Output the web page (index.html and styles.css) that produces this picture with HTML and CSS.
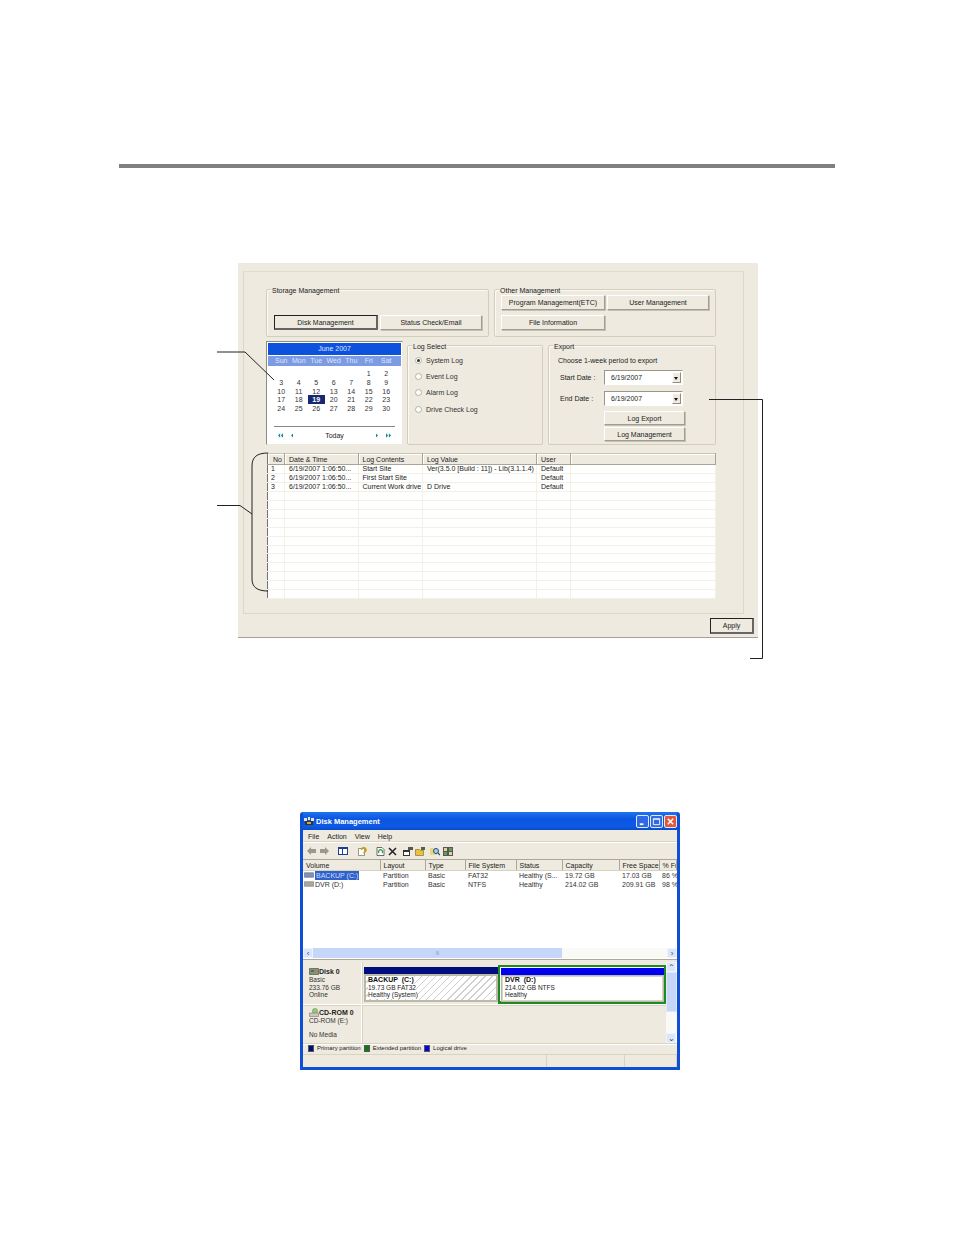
FILE: index.html
```html
<!DOCTYPE html>
<html lang="en">
<head>
<meta charset="utf-8">
<title>Log Management and Disk Management</title>
<link rel="stylesheet" href="styles.css">
</head>
<body>
<main class="page">
  <hr class="rule">

  <section class="dialog">
    <div class="panel">
      <div class="row-top">
        <fieldset class="group storage">
          <legend class="legend">Storage Management</legend>
          <div class="btn-row">
            <button class="btn btn-default w104">Disk Management</button>
            <button class="btn w102">Status Check/Email</button>
          </div>
        </fieldset>
        <fieldset class="group other">
          <legend class="legend">Other Management</legend>
          <div class="btn-row">
            <button class="btn w104">Program Management(ETC)</button>
            <button class="btn w102">User Management</button>
          </div>
          <div class="btn-row second">
            <button class="btn w104">File Information</button>
          </div>
        </fieldset>
      </div>

      <div class="row-mid">
        <div class="calendar">
          <div class="cal-title">June 2007</div>
          <div class="cal-head"><span>Sun</span><span>Mon</span><span>Tue</span><span>Wed</span><span>Thu</span><span>Fri</span><span>Sat</span></div>
          <div class="cal-days">
            <span></span><span></span><span></span><span></span><span></span><span>1</span><span>2</span>
            <span>3</span><span>4</span><span>5</span><span>6</span><span>7</span><span>8</span><span>9</span>
            <span>10</span><span>11</span><span>12</span><span>13</span><span>14</span><span>15</span><span>16</span>
            <span>17</span><span>18</span><span class="today">19</span><span>20</span><span>21</span><span>22</span><span>23</span>
            <span>24</span><span>25</span><span>26</span><span>27</span><span>28</span><span>29</span><span>30</span>
          </div>
          <div class="cal-nav">
            <span class="nav-left">
              <svg class="nav-ico" viewBox="0 0 7 6"><path d="M3 0v6L0 3zM7 0v6L4 3z"/></svg>
              <svg class="nav-ico single" viewBox="0 0 3 6"><path d="M3 0v6L0 3z"/></svg>
            </span>
            <span class="nav-today">Today</span>
            <span class="nav-right">
              <svg class="nav-ico single" viewBox="0 0 3 6"><path d="M0 0v6l3-3z"/></svg>
              <svg class="nav-ico" viewBox="0 0 7 6"><path d="M0 0v6l3-3zM4 0v6l3-3z"/></svg>
            </span>
          </div>
        </div>

        <fieldset class="group logselect">
          <legend class="legend">Log Select</legend>
          <label class="radio"><i class="dot on"></i>System Log</label>
          <label class="radio"><i class="dot"></i>Event Log</label>
          <label class="radio"><i class="dot"></i>Alarm Log</label>
          <label class="radio"><i class="dot"></i>Drive Check Log</label>
        </fieldset>

        <fieldset class="group export">
          <legend class="legend">Export</legend>
          <p class="choose">Choose 1-week period to export</p>
          <div class="date-row start"><span class="date-label">Start Date :</span><span class="combo"><span class="combo-val">6/19/2007</span><span class="combo-btn"><i></i></span></span></div>
          <div class="date-row"><span class="date-label">End Date :</span><span class="combo"><span class="combo-val">6/19/2007</span><span class="combo-btn"><i></i></span></span></div>
          <button class="btn w81 logexport">Log Export</button>
          <button class="btn w81 logmgmt">Log Management</button>
        </fieldset>
      </div>

      <table class="log">
        <colgroup><col class="c1"><col class="c2"><col class="c3"><col class="c4"><col class="c5"><col></colgroup>
        <thead><tr><th>No</th><th>Date &amp; Time</th><th>Log Contents</th><th>Log Value</th><th>User</th><th></th></tr></thead>
        <tbody>
          <tr><td>1</td><td>6/19/2007 1:06:50...</td><td>Start Site</td><td>Ver(3.5.0 [Build : 11]) - Lib(3.1.1.4)</td><td>Default</td><td></td></tr>
          <tr><td>2</td><td>6/19/2007 1:06:50...</td><td>First Start Site</td><td></td><td>Default</td><td></td></tr>
          <tr><td>3</td><td>6/19/2007 1:06:50...</td><td>Current Work drive</td><td>D Drive</td><td>Default</td><td></td></tr>
          <tr><td></td><td></td><td></td><td></td><td></td><td></td></tr>
          <tr><td></td><td></td><td></td><td></td><td></td><td></td></tr>
          <tr><td></td><td></td><td></td><td></td><td></td><td></td></tr>
          <tr><td></td><td></td><td></td><td></td><td></td><td></td></tr>
          <tr><td></td><td></td><td></td><td></td><td></td><td></td></tr>
          <tr><td></td><td></td><td></td><td></td><td></td><td></td></tr>
          <tr><td></td><td></td><td></td><td></td><td></td><td></td></tr>
          <tr><td></td><td></td><td></td><td></td><td></td><td></td></tr>
          <tr><td></td><td></td><td></td><td></td><td></td><td></td></tr>
          <tr><td></td><td></td><td></td><td></td><td></td><td></td></tr>
          <tr><td></td><td></td><td></td><td></td><td></td><td></td></tr>
          <tr><td></td><td></td><td></td><td></td><td></td><td></td></tr>
        </tbody>
      </table>
    </div>
    <div class="apply-row"><button class="btn btn-default apply">Apply</button></div>
  </section>

  <section class="xpwin">
    <header class="xp-title">
      <svg class="xp-appicon" viewBox="0 0 10 10"><path fill="#e8e4d0" d="M0 2h3v3H0zM4 1h2v3H4zM7 2h3v3H7z"/><path fill="#333" d="M1 5h8v4H1z"/><path fill="#c9a94a" d="M3 6h4v2H3z"/></svg>
      <span class="xp-name">Disk Management</span>
      <span class="xp-controls">
        <span class="xp-ctl"><svg viewBox="0 0 10 10"><path fill="#fff" d="M2 7h4v2H2z"/></svg></span>
        <span class="xp-ctl"><svg viewBox="0 0 10 10"><path fill="none" stroke="#fff" d="M1.500 2.500h7v6h-7z"/><path stroke="#fff" d="M1 2h8"/></svg></span>
        <span class="xp-ctl close"><svg viewBox="0 0 10 10"><path stroke="#fff" stroke-width="1.600" d="M2 2l6 6M8 2l-6 6"/></svg></span>
      </span>
    </header>
    <div class="xp-body">
      <nav class="xp-menu"><span>File</span><span>Action</span><span>View</span><span>Help</span></nav>
      <div class="xp-tools">
        <svg class="t back" viewBox="0 0 9 8"><path fill="#9a9a8c" d="M0 4l4-4v2h5v4H4v2z"/></svg>
        <svg class="t fwd" viewBox="0 0 9 8"><path fill="#9a9a8c" d="M9 4L5 0v2H0v4h5v2z"/></svg>
        <svg class="t tree" viewBox="0 0 10 8"><path fill="#1c3f94" d="M0 0h10v8H0z"/><path fill="#fff" d="M1 2h3v5H1zM5 2h4v5H5z"/></svg>
        <svg class="t help" viewBox="0 0 9 9"><path fill="#fff" stroke="#555" stroke-width=".6" d="M.5 1.500h6v7h-6z"/><path fill="none" stroke="#c9a010" stroke-width="1.600" d="M3.500 3c0-3 4.500-3 4.500 0 0 2-2 1.500-2 3.500"/></svg>
        <svg class="t doc" viewBox="0 0 9 9"><path fill="#fff" stroke="#333" stroke-width=".7" d="M1 .5h5l2 2v6H1z"/><path fill="none" stroke="#2a9a3a" stroke-width="1.200" d="M3 6a2 2 0 1 1 3 0"/></svg>
        <svg class="t del" viewBox="0 0 9 9"><path stroke="#222" stroke-width="1.500" d="M1 1l7 7M8 1L1 8"/></svg>
        <svg class="t prop" viewBox="0 0 10 9"><path fill="#333" d="M0 3h7v6H0z"/><path fill="#fff" d="M1 5h5v3H1z"/><path fill="#555" d="M5 0h5v3H5z"/></svg>
        <svg class="t open" viewBox="0 0 11 9"><path fill="#e8c23e" stroke="#7a6420" stroke-width=".6" d="M.5 2.500h4l1 1h3v5h-8z"/><path fill="#4a6a30" d="M6 0h4v3H6z"/></svg>
        <svg class="t find" viewBox="0 0 10 9"><path fill="#e8d87a" d="M0 1h7v7H0z"/><circle cx="6" cy="4" r="2.500" fill="#9fd0ee" stroke="#2c4a80"/><path stroke="#2c4a80" stroke-width="1.200" d="M8 6l2 2"/></svg>
        <svg class="t grid" viewBox="0 0 10 9"><path fill="#556" d="M0 0h10v9H0z"/><path fill="#d8d890" d="M1 1h3v3H1zM6 5h3v3H6z"/><path fill="#6a9a5a" d="M6 1h3v3H6zM1 5h3v3H1z"/></svg>
      </div>

      <div class="xp-listpane">
        <table class="vol">
          <colgroup><col class="v1"><col class="v2"><col class="v3"><col class="v4"><col class="v5"><col class="v6"><col class="v7"><col></colgroup>
          <thead><tr><th>Volume</th><th>Layout</th><th>Type</th><th>File System</th><th>Status</th><th>Capacity</th><th>Free Space</th><th>% Fr</th></tr></thead>
          <tbody>
            <tr><td class="volname"><svg class="drive" viewBox="0 0 11 6"><path fill="#7d93b8" stroke="#56647f" stroke-width=".6" d="M.5.500h10v5H.5z"/></svg><span class="picked">BACKUP (C:)</span></td><td>Partition</td><td>Basic</td><td>FAT32</td><td>Healthy (S...</td><td>19.72 GB</td><td>17.03 GB</td><td>86 %</td></tr>
            <tr><td class="volname"><svg class="drive" viewBox="0 0 11 6"><path fill="#a9a9a4" stroke="#6e6e6a" stroke-width=".6" d="M.5.500h10v5H.5z"/></svg><span>DVR (D:)</span></td><td>Partition</td><td>Basic</td><td>NTFS</td><td>Healthy</td><td>214.02 GB</td><td>209.91 GB</td><td>98 %</td></tr>
          </tbody>
        </table>
        <div class="hscroll">
          <span class="sb-btn">‹</span>
          <span class="hthumb"><i></i></span>
          <span class="hrest"></span>
          <span class="sb-btn">›</span>
        </div>
      </div>

      <div class="xp-diskpane">
        <div class="disks">
          <div class="disk-row d0">
            <div class="disk-info">
              <b class="disk-name"><svg class="disk-ico" viewBox="0 0 10 7"><path fill="#8a8f7a" stroke="#444" stroke-width=".6" d="M.5.500h9v6h-9z"/><path fill="#3f7a4a" d="M2 2h3v2H2z"/></svg>Disk 0</b>
              <span>Basic</span><span>233.76 GB</span><span>Online</span>
            </div>
            <div class="part backup">
              <div class="bar navy"></div>
              <div class="pbox hatch"><b>BACKUP  (C:)</b><span>19.73 GB FAT32</span><span>Healthy (System)</span></div>
            </div>
            <div class="part dvr">
              <div class="bar blue"></div>
              <div class="pbox"><b>DVR  (D:)</b><span>214.02 GB NTFS</span><span>Healthy</span></div>
            </div>
          </div>
          <div class="disk-row d1">
            <div class="disk-info">
              <b class="disk-name"><svg class="disk-ico big" viewBox="0 0 10 9"><circle cx="6" cy="3" r="2.600" fill="#8fd06a" stroke="#777" stroke-width=".5"/><path fill="#c8c8bc" stroke="#666" stroke-width=".5" d="M.5 5h9v3.500h-9z"/></svg>CD-ROM 0</b>
              <span>CD-ROM (E:)</span><span class="nomedia">No Media</span>
            </div>
            <div class="empty"></div>
          </div>
        </div>
        <div class="vscroll">
          <span class="sb-btn">⌃</span>
          <span class="vthumb"></span>
          <span class="vrest"></span>
          <span class="sb-btn">⌄</span>
        </div>
      </div>

      <div class="xp-legend">
        <span class="lg"><i class="sw navybg"></i>Primary partition</span>
        <span class="lg"><i class="sw greenbg"></i>Extended partition</span>
        <span class="lg"><i class="sw bluebg"></i>Logical drive</span>
      </div>
      <div class="xp-status"><span></span><span></span><span></span></div>
    </div>
  </section>

  <svg class="leaders" viewBox="0 0 954 1235" aria-hidden="true">
    <path d="M217 352H245L274 380"/>
    <path d="M217 505.500H240L252 514"/>
    <path d="M268 453C257 453 252 457 252 466V579C252 587 257 591 268 591"/>
    <path d="M709 399.500H762.500V658.500H750"/>
  </svg>
</main>
</body>
</html>
```
FILE: styles.css
```css
* { box-sizing: border-box; }
html, body { margin: 0; padding: 0; background: #fff; }
body { font-family: "Liberation Sans", Arial, sans-serif; font-size: 7px; line-height: 9px; color: #222; }
.page { position: relative; width: 954px; height: 1235px; padding-top: 164px; overflow: hidden; }

.rule { width: 716px; height: 4px; margin: 0 0 95px 119px; border: 0; background: #808080; }

/* Top dialog */
.dialog { width: 520px; height: 375px; margin-left: 238px; padding: 8px 0 0 5px; background: #eeeadf; border-bottom: 1px solid #a89c98; }
.panel { width: 501px; height: 343px; padding: 17px 0 0 22px; border: 1px solid #dcd8c6; border-top-color: #e2decd; }
.row-top { display: flex; gap: 5px; }
.row-mid { display: flex; margin-top: 4px; align-items: flex-end; }

.group { position: relative; min-width: 0; margin: 0; padding: 0; border: 1px solid #d2ceba; border-radius: 2px; box-shadow: inset 1px 1px 0 #fbfaf5; }
.legend { position: absolute; top: -4px; left: 4px; padding: 0 1px; background: #eeeadf; }
.storage { width: 223px; height: 48px; padding: 25px 0 0 7px; }
.other { width: 222px; height: 48px; padding: 5px 0 0 6px; }
.btn-row { display: flex; gap: 2px; }
.btn-row.second { margin-top: 5px; }

.btn { display: block; height: 15px; padding: 0; font: inherit; color: #222; background: #eeeadf; border: 1px solid; border-color: #fff #a09d90 #a09d90 #fff; box-shadow: 1px 1px 0 #c4c1b2; }
.btn-default { border-color: #222; border-right-width: 2px; border-bottom-width: 2px; border-right-color: #666; border-bottom-color: #666; box-shadow: none; }
.w104 { width: 104px; }
.w102 { width: 102px; }
.w81 { width: 81px; }

/* Calendar */
.calendar { width: 137px; height: 104px; padding: 1px 1px 0 1px; background: #fff; border: 1px solid; border-color: #8f8c80 #eeeadf #eeeadf #8f8c80; }
.cal-title { height: 12px; margin-bottom: 1px; line-height: 12px; text-align: center; color: #dfe8ff; background: #0d52dd; }
.cal-head { display: grid; grid-template-columns: repeat(7, 17.5px); height: 10px; padding-left: 4.500px; line-height: 10px; text-align: center; color: #dfe6f8; background: #7c9be2; }
.cal-days { display: grid; grid-template-columns: repeat(7, 17.5px); grid-auto-rows: 8.800px; padding-left: 4.500px; margin-top: 3px; line-height: 9px; text-align: center; color: #333; }
.today { color: #fff; background: #16286f; font-weight: bold; }
.cal-nav { display: flex; align-items: center; height: 18px; margin: 13px 6px 0 6px; border-top: 1px solid #8a887c; padding: 0 4px 0 4px; }
.nav-left, .nav-right { display: flex; align-items: center; gap: 8px; width: 40px; }
.nav-right { justify-content: flex-end; gap: 8px; }
.nav-today { flex: 1; text-align: center; }
.nav-ico { width: 5px; height: 5px; fill: #138a94; }
.nav-ico.single { width: 2px; }

/* Log select */
.logselect { width: 136px; height: 100px; margin-left: 4px; padding: 6px 0 0 7px; }
.radio { display: flex; align-items: center; height: 16.300px; color: #333; }
.dot { position: relative; width: 7px; height: 7px; margin-right: 4px; background: #fff; border: 1px solid #b4b2a4; border-radius: 50%; }
.dot.on::after { content: ""; position: absolute; left: 1px; top: 1px; width: 3px; height: 3px; border-radius: 50%; background: #333; }

/* Export */
.export { width: 168px; height: 100px; margin-left: 5px; padding: 10px 0 0 9px; }
.choose { margin: 0 0 5px 0; line-height: 9px; }
.date-row { display: flex; align-items: center; height: 15px; margin-bottom: 6px; }
.date-label { width: 46px; padding-left: 2px; }
.combo { display: flex; width: 79px; height: 15px; background: #fff; border: 1px solid; border-color: #9a9788 #fff #fff #9a9788; }
.combo-val { flex: 1; padding: 2px 0 0 6px; }
.combo-btn { position: relative; width: 9px; margin: 1px; background: #eeeadf; border: 1px solid; border-color: #fff #8f8c80 #8f8c80 #fff; }
.combo-btn i { position: absolute; left: 1px; top: 4px; border: 2px solid transparent; border-top: 3px solid #111; border-bottom: 0; }
.logexport { margin: -1px 0 0 46px; height: 14px; }
.logmgmt { margin: 2px 0 0 46px; height: 14px; }

/* Log table */
.log { width: 449px; height: 146px; margin: 8px 0 0 1px; table-layout: fixed; border-collapse: collapse; background: #fff; border-left: 1px solid #77756a; border-top: 1px solid #c8c4b4; }
.c1 { width: 17px; }
.c2 { width: 73.5px; }
.c3 { width: 64.5px; }
.c4 { width: 114px; }
.c5 { width: 34px; }
.log th { height: 11px; padding: 0 0 0 4px; font-weight: normal; text-align: left; background: #eeeadf; border-right: 1px solid #a8a596; border-bottom: 1px solid #a8a596; box-shadow: inset 1px 1px 0 #fff; }
.log th:first-child { padding-left: 5px; }
.log td { height: 8.84px; padding: 0 0 0 4px; white-space: nowrap; overflow: hidden; color: #222; line-height: 8px; border-right: 1px solid #f3f0e4; border-bottom: 1px solid #f3f0e4; }
.log td:first-child { padding-left: 3px; }

.apply-row { display: flex; justify-content: flex-end; padding: 4px 4px 0 0; }
.apply { width: 44px; height: 16px; }

/* Disk Management window */
.xpwin { display: flex; flex-direction: column; width: 380px; height: 258px; margin: 174px 0 0 300px; background: #0f4fd6; border-radius: 3px 3px 0 0; padding: 0 3px 3px 3px; }
.xp-title { display: flex; align-items: center; height: 18px; padding: 0 0 0 1px; color: #fff; background: linear-gradient(#1f74ee, #0a55e0 40%, #0c5be6 80%, #0a4cc8); }
.xp-appicon { width: 10px; height: 10px; margin-right: 2px; }
.xp-name { flex: 1; padding-top: 1px; font-weight: bold; font-size: 7.5px; }
.xp-controls { display: flex; gap: 1px; }
.xp-ctl { display: flex; width: 13px; height: 13px; padding: 1px; background: #2f6ae4; border: 1px solid #dfe8ff; border-radius: 2px; }
.xp-ctl svg { width: 100%; height: 100%; }
.xp-ctl.close { background: #e2583a; }
.xp-body { display: flex; flex: 1; flex-direction: column; min-height: 0; background: #eeeadf; }
.xp-menu { display: flex; gap: 8px; height: 12px; padding: 1px 0 0 5px; line-height: 11px; border-bottom: 1px solid #d8d4c2; }
.xp-tools { display: flex; align-items: center; height: 18px; padding-left: 4px; border-top: 1px solid #fff; border-bottom: 1px solid #aca899; }
.t { display: block; flex: none; width: 9px; height: 8px; margin-right: 4px; }
.fwd { margin-right: 9px; }
.tree { width: 10px; margin-right: 10px; }
.help { height: 9px; margin-right: 9px; }
.doc { height: 9px; margin-right: 3px; }
.del { height: 9px; margin-right: 6px; }
.prop { width: 10px; height: 9px; margin-right: 2px; }
.open { width: 11px; height: 9px; margin-right: 4px; }
.find { width: 10px; height: 9px; margin-right: 3px; }
.grid { width: 10px; height: 9px; }

.xp-listpane { display: flex; flex-direction: column; height: 100px; padding-bottom: 1px; background: #fff; border-bottom: 1px solid #aca899; }
.vol { width: 100%; table-layout: fixed; border-collapse: collapse; height: 20px; }
.v1 { width: 77px; }
.v2 { width: 45px; }
.v3 { width: 40px; }
.v4 { width: 51px; }
.v5 { width: 46px; }
.v6 { width: 57px; }
.v7 { width: 40px; }
.vol th { height: 10px; padding: 2px 0 0 3px; font-weight: normal; line-height: 7px; text-align: left; white-space: nowrap; overflow: hidden; background: #eeeadf; border-right: 1px solid #aca899; border-bottom: 1px solid #d6d2c0; }
.vol td { height: 9px; padding: 0 0 0 3px; white-space: nowrap; overflow: hidden; color: #333; line-height: 9px; }
.vol td.volname { display: flex; align-items: center; padding-left: 1px; }
.drive { width: 10px; height: 6px; margin-right: 1px; }
.picked { padding: 0 1px; color: #cfdcff; background: #2f62c8; }
.hscroll { display: flex; flex: none; height: 10px; margin-top: auto; background: #fff; }
.sb-btn { display: flex; flex: none; align-items: center; justify-content: center; width: 10px; height: 10px; font-size: 8px; line-height: 9px; color: #33466f; background: #dbe6fb; border: 1px solid #eef3fe; }
.hthumb { display: flex; align-items: center; justify-content: center; width: 249px; background: #c5d6f8; }
.hthumb i { width: 3px; height: 4px; background: #a5bde8; }
.hrest { flex: 1; background: #f9f9f5; }

.xp-diskpane { display: flex; flex: 1; min-height: 0; margin-top: 2px; }
.disks { flex: 1; min-width: 0; }
.disk-row { display: flex; }
.d0 { height: 43px; border-bottom: 1px solid #fff; box-shadow: 0 1px 0 #d8d4c2; }
.d1 { height: 38px; }
.disk-info { display: flex; flex-direction: column; flex: none; width: 59px; padding: 5px 0 0 6px; font-size: 6.5px; line-height: 7.600px; border-right: 1px solid #fff; box-shadow: 1px 0 0 #d8d4c2; color: #333; }
.d1 .disk-info { padding-top: 3px; }
.disk-name { display: flex; align-items: center; height: 9px; font-size: 7px; font-weight: bold; color: #222; }
.disk-ico { width: 10px; height: 7px; margin-right: 0; }
.disk-ico.big { width: 10px; height: 9px; }
.nomedia { margin-top: 6px; }
.part { display: flex; flex-direction: column; flex: none; }
.backup { width: 134px; margin: 5px 0 0 2px; }
.dvr { width: 168px; height: 39px; margin: 3px 0 0 0; padding: 2px 1px 0 2px; background: #fff; border: 1px solid #1d8a22; border-width: 1px 1px 2px 1px; box-shadow: inset 0 0 0 1px #1d8a22; }
.bar { height: 7px; flex: none; }
.navy { background: #000f7f; }
.blue { background: #0000ee; }
.pbox { display: flex; flex-direction: column; align-items: flex-start; height: 28px; padding: 0 0 0 3px; font-size: 6.5px; line-height: 7.700px; background: #fff; border: 1px solid #bdb9a8; outline: 1px solid #d8d4c2; outline-offset: -2px; }
.backup .pbox { padding-left: 2px; border: 2px solid #bdb9a8; outline: 0; }
.hatch { background: repeating-linear-gradient(135deg, #fff 0 4px, #cfcfcf 4px 5px); }
.hatch b, .hatch span { background: #fff; }
.pbox b { font-size: 7px; color: #111; white-space: pre; }
.empty { flex: 1; }
.vscroll { display: flex; flex-direction: column; flex: none; width: 11px; background: #fff; }
.vthumb { height: 40px; background: #c5d6f8; border: 1px solid #dfe8fb; }
.vrest { flex: 1; background: #f9f9f5; }

.xp-legend { display: flex; gap: 3px; align-items: center; height: 12px; padding: 0 0 1px 5px; font-size: 6px; border-top: 1px solid #d8d4c2; border-bottom: 1px solid #d8d4c2; box-shadow: inset 0 1px 0 #fff; }
.lg { display: flex; align-items: center; }
.sw { width: 6px; height: 7px; margin-right: 3px; border: 1px solid #555; }
.navybg { background: #000f7f; }
.greenbg { background: #0a7d14; }
.bluebg { background: #0000ee; }
.xp-status { display: grid; grid-template-columns: 244px 78px 1fr; height: 12px; }
.xp-status span { border-right: 1px solid #d8d4c2; }

.leaders { position: absolute; left: 0; top: 0; width: 954px; height: 1235px; pointer-events: none; }
.leaders path { fill: none; stroke: #222; stroke-width: 1; }
```
